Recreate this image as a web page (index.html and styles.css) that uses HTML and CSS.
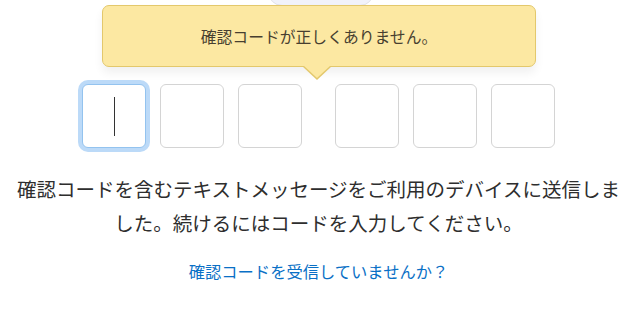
FILE: index.html
```html
<!DOCTYPE html>
<html lang="ja">
<head>
    <meta charset="UTF-8">
    <meta name="viewport" content="width=device-width, initial-scale=1.0">
    <title>確認コード</title>
    <link rel="stylesheet" href="styles.css">
</head>
<body>
    <div class="top-shape"></div>

    <div class="verify">
        <div class="tooltip">確認コードが正しくありません。</div>

        <div class="code-inputs">
            <div class="code-group">
                <div class="code-box focused"><span class="caret"></span></div>
                <div class="code-box"></div>
                <div class="code-box"></div>
            </div>
            <div class="code-group">
                <div class="code-box"></div>
                <div class="code-box"></div>
                <div class="code-box"></div>
            </div>
        </div>

        <p class="message">確認コードを含むテキストメッセージをご利用のデバイスに送信しました。続けるにはコードを入力してください。</p>

        <a class="resend" href="#">確認コードを受信していませんか？</a>
    </div>
</body>
</html>
```

FILE: styles.css
```css
body {
    margin: 0;
    font-family: "Noto Sans CJK JP", "Noto Sans", sans-serif;
    background: #fff;
    color: #2e2e2e;
    position: relative;
}
.top-shape {
    position: absolute;
    top: -10px;
    left: 268px;
    width: 104px;
    height: 14px;
    background: #f1f2fa;
    border: 1px solid #e2e2e8;
    border-radius: 0 0 14px 14px;
}
.verify {
    display: flex;
    flex-direction: column;
    align-items: center;
    padding: 5px 8px 0;
}
.tooltip {
    position: relative;
    z-index: 1;
    box-sizing: border-box;
    width: 434px;
    height: 62px;
    display: flex;
    align-items: center;
    justify-content: center;
    background: #fce8a2;
    border: 1px solid #e3c86c;
    border-radius: 7px;
    box-shadow: 0 6px 10px rgba(0,0,0,0.06);
    font-size: 15.8px;
    color: #473f30;
    margin-left: 1px;
}
.tooltip::before {
    content: "";
    position: absolute;
    left: 199px;
    bottom: -14px;
    border-left: 15px solid transparent;
    border-right: 15px solid transparent;
    border-top: 14px solid #e3c86c;
}
.tooltip::after {
    content: "";
    position: absolute;
    left: 200px;
    bottom: -12px;
    border-left: 14px solid transparent;
    border-right: 14px solid transparent;
    border-top: 13px solid #fce8a2;
}
.code-inputs {
    display: flex;
    gap: 33px;
    margin-top: 17px;
}
.code-group {
    display: flex;
    gap: 14px;
}
.code-box {
    box-sizing: border-box;
    width: 64px;
    height: 64px;
    border: 1px solid #d4d4d4;
    border-radius: 6px;
    background: #fff;
    display: flex;
    align-items: center;
    justify-content: center;
}
.code-box.focused {
    border-color: #93c3ef;
    box-shadow: 0 0 0 4px #bcdaf8;
}
.caret {
    width: 1px;
    height: 39px;
    background: #333;
}
.message {
    margin: 24px 0 0;
    font-size: 19.5px;
    line-height: 34px;
    text-align: center;
}
.resend {
    margin-top: 21px;
    font-size: 16.3px;
    line-height: 20px;
    color: #0a70c6;
    text-decoration: none;
}
```
